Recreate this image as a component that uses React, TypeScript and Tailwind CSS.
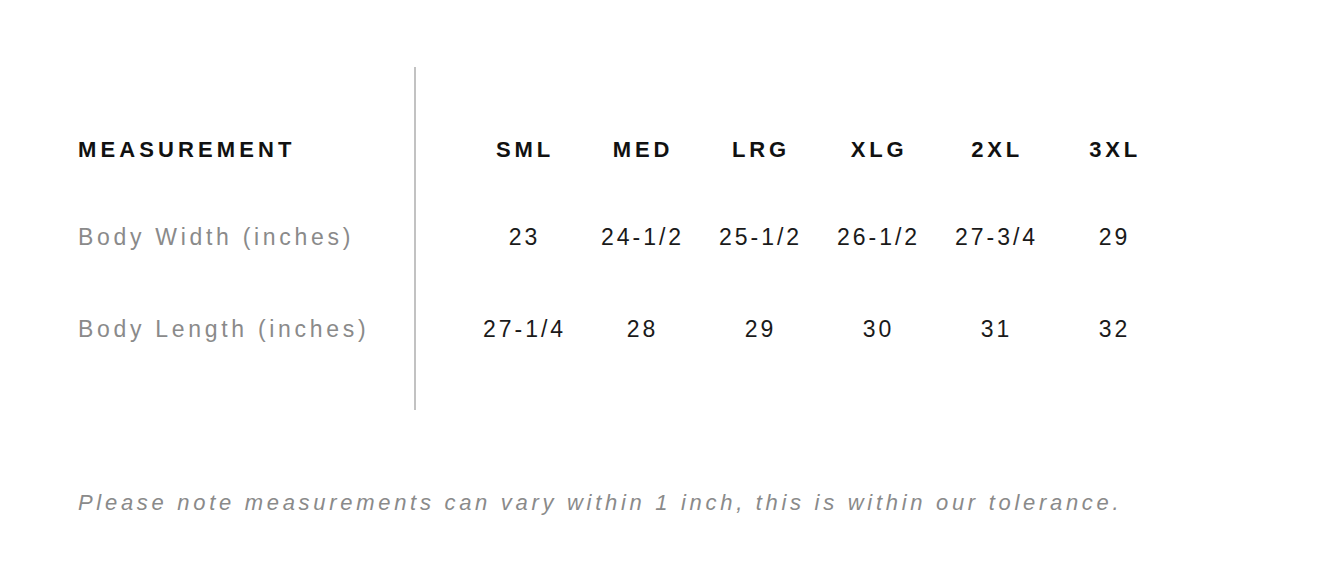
const SIZES = ["SML", "MED", "LRG", "XLG", "2XL", "3XL"];

const ROWS = [
  { label: "Body Width (inches)", values: ["23", "24-1/2", "25-1/2", "26-1/2", "27-3/4", "29"], height: "h-[88px]" },
  { label: "Body Length (inches)", values: ["27-1/4", "28", "29", "30", "31", "32"], height: "h-[96px]" },
];

const App = () => {
  return (
    <div className="min-h-[572px] w-[1330px] bg-white pt-[67px] font-['Liberation_Sans',Arial,sans-serif]">
      <div className="flex">
        {/* labels */}
        <div className="w-[414px] shrink-0 whitespace-nowrap pl-[78px] pt-[38px] pb-[33px]">
          <div className="flex h-[88px] items-center text-[22px] font-bold tracking-[4.1px] text-[#111]">
            MEASUREMENT
          </div>
          {ROWS.map((row) => (
            <div
              key={row.label}
              className={`flex ${row.height} items-center text-[23px] tracking-[3.7px] text-[#8a8a8a]`}
            >
              {row.label}
            </div>
          ))}
        </div>

        <div className="w-[2px] shrink-0 bg-[#c2c2c2]" />

        {/* size columns */}
        <div className="whitespace-nowrap pl-[48px] pt-[38px] pb-[33px]">
          <div className="grid h-[88px] grid-cols-[repeat(6,118px)] items-center">
            {SIZES.map((size) => (
              <div key={size} className="pl-[4px] text-center text-[22px] font-bold tracking-[3.8px] text-[#111]">
                {size}
              </div>
            ))}
          </div>
          {ROWS.map((row) => (
            <div key={row.label} className={`grid ${row.height} grid-cols-[repeat(6,118px)] items-center`}>
              {row.values.map((v, i) => (
                <div key={i} className="pl-[3px] text-center text-[23px] tracking-[3px] text-[#1a1a1a]">
                  {v}
                </div>
              ))}
            </div>
          ))}
        </div>
      </div>

      <p className="mt-[79px] pl-[78px] text-[22px] leading-[28px] italic tracking-[3.7px] text-[#8a8a8a]">
        Please note measurements can vary within 1 inch, this is within our tolerance.
      </p>
    </div>
  );
};

export default App;
